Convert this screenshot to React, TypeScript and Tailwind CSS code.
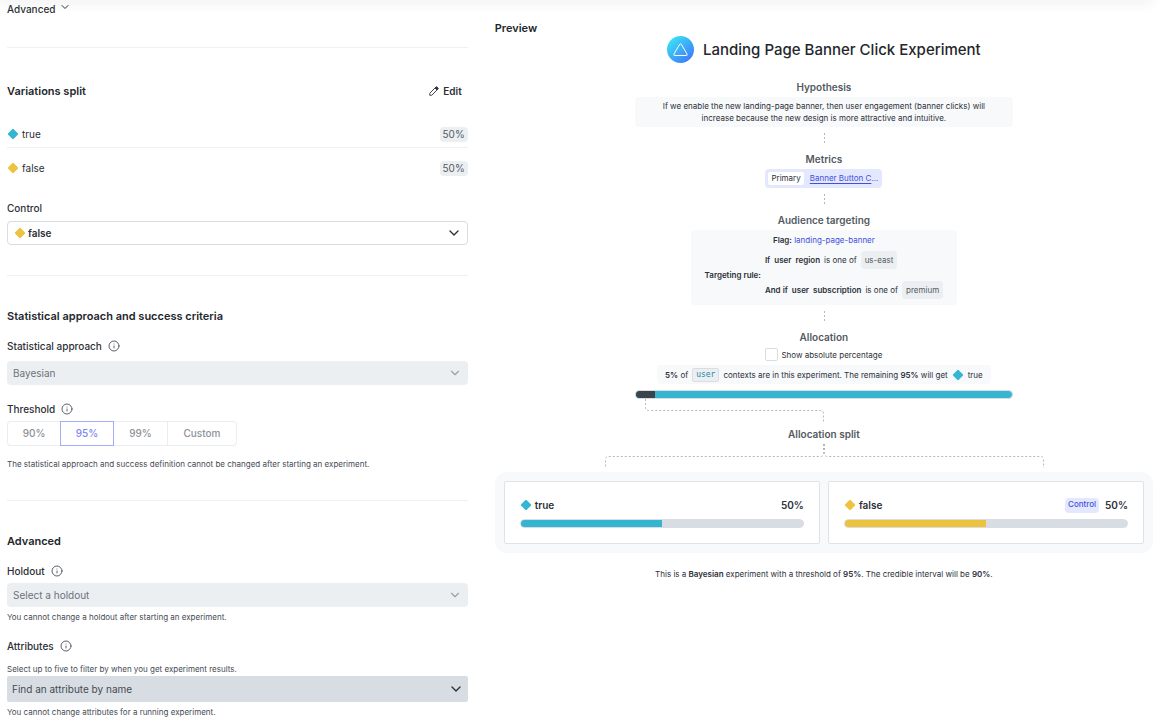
import { useState, type ReactNode } from "react";
import { ChevronDown, Info } from "lucide-react";

const TEAL = "text-[#35b5d0]";
const YELLOW = "text-[#ecc23f]";

function Diamond({ className }: { className: string }) {
  return (
    <svg viewBox="0 0 12 12" className={`size-3 shrink-0 ${className}`} aria-hidden="true">
      <path
        d="M5.2 1.2 1.2 5.2a1.1 1.1 0 0 0 0 1.6l4 4a1.1 1.1 0 0 0 1.6 0l4-4a1.1 1.1 0 0 0 0-1.6l-4-4a1.1 1.1 0 0 0-1.6 0Z"
        fill="currentColor"
      />
    </svg>
  );
}

function PencilIcon() {
  return (
    <svg viewBox="0 0 20 20" className="size-[10px]" fill="none" stroke="currentColor" strokeWidth="1.8" strokeLinejoin="round" aria-hidden="true">
      <path d="M1.500 18.500v-4L13 3a2.8 2.8 0 0 1 4 4L5.500 18.500Z" />
      <path d="M12 4 13 3a2.8 2.8 0 0 1 4 4l-1 1Z" fill="currentColor" />
    </svg>
  );
}

function SectionTitle({ children }: { children: ReactNode }) {
  return <h2 className="text-[11px] leading-4 font-semibold text-[#23272d]">{children}</h2>;
}

function FieldLabel({ htmlFor, info = true, children }: { htmlFor: string; info?: boolean; children: ReactNode }) {
  return (
    <div className="flex h-4 items-center gap-[6px]">
      <label htmlFor={htmlFor} className="text-[10px] leading-4 font-medium">
        {children}
      </label>
      {info && <Info className="size-3 text-[#4a5058]" strokeWidth={1.8} />}
    </div>
  );
}

function Help({ children }: { children: ReactNode }) {
  return <p className="text-[8px] leading-3 text-[#454b54]">{children}</p>;
}

function Divider() {
  return <hr className="border-[#eff1f3]" />;
}

function VariationRow({ color, name }: { color: string; name: string }) {
  return (
    <li className="flex items-center justify-between">
      <span className="flex items-center gap-[3px] text-[10px] leading-4">
        <Diamond className={color} />
        {name}
      </span>
      <span className="rounded bg-[#ebeff2] px-[3px] text-[10px] leading-[15px] text-[#545a62]">50%</span>
    </li>
  );
}

function DisabledSelect({ id, text }: { id: string; text: string }) {
  return (
    <div className="grid items-center">
      <select
        id={id}
        disabled
        className="col-start-1 row-start-1 h-6 w-full appearance-none rounded bg-[#ebeff2] px-[6px] text-[10px] text-[#6c727b] opacity-100"
      >
        <option>{text}</option>
      </select>
      <ChevronDown className="pointer-events-none col-start-1 row-start-1 mr-[6px] size-[14px] justify-self-end text-[#9aa0a8]" strokeWidth={2} />
    </div>
  );
}

const THRESHOLDS = ["90%", "95%", "99%", "Custom"];

function SettingsForm() {
  return (
    <form className="flex flex-col">
      <button type="button" className="mt-px flex items-start gap-1 self-start text-[10px] leading-4 font-medium">
        Advanced
        <ChevronDown className="size-3" strokeWidth={2} />
      </button>

      <div className="mt-[30px]">
        <Divider />
      </div>

      <section className="mt-[35px]">
        <div className="flex items-center justify-between pr-[6px]">
          <SectionTitle>Variations split</SectionTitle>
          <button type="button" className="flex items-center gap-1 text-[10px] leading-4 font-semibold">
            <PencilIcon />
            Edit
          </button>
        </div>
        <ul className="mt-[27px] flex flex-col">
          <VariationRow color={TEAL} name="true" />
          <li role="presentation" className="mt-[5px] mb-3">
            <Divider />
          </li>
          <VariationRow color={YELLOW} name="false" />
        </ul>
        <div className="mt-6 flex flex-col gap-[5px]">
          <FieldLabel htmlFor="control" info={false}>
            Control
          </FieldLabel>
          <div className="grid items-center">
            <select
              id="control"
              defaultValue="false"
              className="col-start-1 row-start-1 h-6 w-full appearance-none rounded border border-[#d8dde3] bg-white pl-[20px] text-[10px] font-semibold"
            >
              <option>false</option>
              <option>true</option>
            </select>
            <Diamond className="pointer-events-none col-start-1 row-start-1 ml-[7px] text-[#ecc23f]" />
            <ChevronDown className="pointer-events-none col-start-1 row-start-1 mr-[6px] size-4 justify-self-end" strokeWidth={2} />
          </div>
        </div>
      </section>

      <div className="mt-[30px]">
        <Divider />
      </div>

      <section className="mt-8">
        <SectionTitle>Statistical approach and success criteria</SectionTitle>
        <div className="mt-[14px] flex flex-col gap-[7px]">
          <FieldLabel htmlFor="approach">Statistical approach</FieldLabel>
          <DisabledSelect id="approach" text="Bayesian" />
        </div>
        <div className="mt-4 flex flex-col gap-1">
          <FieldLabel htmlFor="threshold-95">Threshold</FieldLabel>
          <div role="group" aria-label="Threshold" className="flex h-[25px] text-[10px] font-medium text-[#8d9299]">
            {THRESHOLDS.map((value) =>
              value === "95%" ? (
                <button key={value} id="threshold-95" type="button" disabled className="w-[54px] border border-[#a3aef8] text-[#7b88f3]">
                  {value}
                </button>
              ) : (
                <button
                  key={value}
                  type="button"
                  disabled
                  className="w-[54px] border-y border-r border-[#ebeef1] first:w-[53px] first:rounded-l first:border-l first:border-r-0 last:w-[69px] last:rounded-r"
                >
                  {value}
                </button>
              ),
            )}
          </div>
        </div>
        <div className="mt-3">
          <Help>The statistical approach and success definition cannot be changed after starting an experiment.</Help>
        </div>
      </section>

      <div className="mt-[30px]">
        <Divider />
      </div>

      <section className="mt-8">
        <SectionTitle>Advanced</SectionTitle>
        <div className="mt-[14px] flex flex-col gap-1">
          <FieldLabel htmlFor="holdout">Holdout</FieldLabel>
          <DisabledSelect id="holdout" text="Select a holdout" />
          <Help>You cannot change a holdout after starting an experiment.</Help>
        </div>
        <div className="mt-[15px] flex flex-col">
          <FieldLabel htmlFor="attributes">Attributes</FieldLabel>
          <div className="mt-[9px] mb-px">
            <Help>Select up to five to filter by when you get experiment results.</Help>
          </div>
          <div className="mb-1 grid items-center">
            <input
              id="attributes"
              type="text"
              disabled
              placeholder="Find an attribute by name"
              className="col-start-1 row-start-1 h-[26px] w-full rounded-[2px] bg-[#d8dde3] px-[5px] text-[10px] placeholder:text-[#454b54]"
            />
            <ChevronDown className="pointer-events-none col-start-1 row-start-1 mr-1 size-4 justify-self-end" strokeWidth={2} />
          </div>
          <Help>You cannot change attributes for a running experiment.</Help>
        </div>
      </section>
    </form>
  );
}

function DottedLink() {
  return (
    <svg viewBox="0 0 2 12" className="my-[6px] h-3 w-[2px]" aria-hidden="true">
      <path d="M1.500 0V12" stroke="#b4b8bd" strokeDasharray="2 2" />
    </svg>
  );
}

function StepTitle({ children }: { children: ReactNode }) {
  return <h3 className="text-[10px] leading-4 font-semibold text-[#545a62]">{children}</h3>;
}

function Chip({ children }: { children: ReactNode }) {
  return <span className="rounded bg-[#ebeff2] px-1 text-[8px] leading-[18px] text-[#545a62]">{children}</span>;
}

function AllocationCard({ color, fill, name, control = false }: { color: string; fill: string; name: string; control?: boolean }) {
  return (
    <article className="flex flex-1 flex-col gap-[6px] rounded-[2px] border border-[#dfe3e8] bg-white px-[15px] py-[15px]">
      <div className="flex h-4 items-center text-[10px] leading-4 font-semibold">
        <Diamond className={color} />
        <span className="ml-[3px] flex-1">{name}</span>
        {control && (
          <span className="mr-[6px] rounded bg-[#e3e8ff] px-[3px] pb-[3px] text-[8px] leading-3 font-medium text-[#4350de]">Control</span>
        )}
        <span>50%</span>
      </div>
      <div className="h-[9px] overflow-hidden rounded-full border border-[#d8dde3] bg-[#d8dde3]">
        <div className={`h-full w-1/2 ${fill}`} />
      </div>
    </article>
  );
}

function Preview() {
  const [absolute, setAbsolute] = useState(false);
  return (
    <section className="flex flex-col pt-5">
      <SectionTitle>Preview</SectionTitle>
      <div className="flex flex-col items-center">
        <div className="flex items-center gap-[9px]">
          <svg viewBox="0 0 54 54" className="size-[27px]" aria-hidden="true">
            <defs>
              <linearGradient id="logo" x1="0.15" y1="0.1" x2="0.85" y2="0.9">
                <stop offset="0" stopColor="#3be0f5" />
                <stop offset="1" stopColor="#3d7dfb" />
              </linearGradient>
            </defs>
            <circle cx="27" cy="27" r="27" fill="url(#logo)" />
            <path
              d="M25.4 16.6 13.9 36.2a1.9 1.9 0 0 0 1.6 2.8h23a1.9 1.9 0 0 0 1.6-2.8L28.6 16.6a1.9 1.9 0 0 0-3.2 0Z"
              fill="none"
              stroke="#fff"
              strokeWidth="2"
              strokeLinejoin="round"
            />
          </svg>
          <h1 className="text-[15px] leading-5 font-medium text-[#23272d]">Landing Page Banner Click Experiment</h1>
        </div>

        <div className="mt-4 flex flex-col items-center gap-[2px]">
          <StepTitle>Hypothesis</StepTitle>
          <p className="w-[378px] rounded bg-[#f7f9fb] px-5 py-[3px] text-center text-[8px] leading-3">
            If we enable the new landing-page banner, then user engagement (banner clicks) will increase because the new design is more
            attractive and intuitive.
          </p>
        </div>
        <DottedLink />
        <StepTitle>Metrics</StepTitle>
        <div className="mt-[2px] flex items-center gap-[6px] rounded bg-[#e3e8ff] py-[3px] pr-1 pl-[3px] text-[8px] leading-[13px]">
          <span className="rounded-[2px] bg-white px-[3px]">Primary</span>
          <span className="text-[#4350de]">
            <a href="#metric" className="underline underline-offset-2">
              Banner Button C
            </a>
            ...
          </span>
        </div>
        <DottedLink />
        <StepTitle>Audience targeting</StepTitle>
        <div className="mt-[2px] flex flex-col items-center rounded bg-[#f7f9fb] px-[14px] pt-1 pb-[6px] text-[8px] leading-3">
          <p>
            <span className="font-semibold">Flag:</span>{" "}
            <a href="#flag" className="text-[#4350de]">
              landing-page-banner
            </a>
          </p>
          <div className="mt-[5px] flex items-center gap-1">
            <span className="font-semibold">Targeting rule:</span>
            <div className="flex flex-col gap-3">
              <p className="flex items-center gap-1">
                <b className="font-semibold">If</b>
                <b className="font-semibold">user</b>
                <b className="font-semibold">region</b>
                <span>is one of</span>
                <Chip>us-east</Chip>
              </p>
              <p className="flex items-center gap-1">
                <b className="font-semibold">And if</b>
                <b className="font-semibold">user</b>
                <b className="font-semibold">subscription</b>
                <span>is one of</span>
                <Chip>premium</Chip>
              </p>
            </div>
          </div>
        </div>
        <DottedLink />
        <StepTitle>Allocation</StepTitle>
        <label className="mt-[3px] flex items-center gap-[3px] text-[8px] leading-3">
          <input
            type="checkbox"
            checked={absolute}
            onChange={(event) => setAbsolute(event.target.checked)}
            className="size-[13px] appearance-none rounded-[2px] border border-[#d8dde3] bg-white checked:bg-[#405bff]"
          />
          Show absolute percentage
        </label>
        <p className="mt-1 flex h-[19px] items-center gap-1 rounded bg-[#f7f9fb] px-2 text-[8px] leading-3">
          <span>
            <b className="font-semibold">5%</b> of
          </span>
          <code className="rounded-[2px] border border-[#d8dde3] bg-[#ebeff2] px-[3px] font-['DejaVu_Sans_Mono',monospace] text-[8px] text-[#2a86a0]">
            user
          </code>
          <span>
            contexts are in this experiment. The remaining <b className="font-semibold">95%</b> will get
          </span>
          <Diamond className={TEAL} />
          <span>true</span>
        </p>
        <div className="mt-[6px] flex h-[9px] w-[378px] overflow-hidden rounded-full border border-[#d8dde3] bg-[#35b5d0]">
          <div className="w-[5%] bg-[#3d434b]" />
        </div>
        <svg viewBox="0 0 378 24" className="h-6 w-[378px]" fill="none" stroke="#b4b8bd" strokeDasharray="2 2" aria-hidden="true">
          <path d="M10.500 0V8.500Q10.500 11.500 13.500 11.500H185.500Q188.500 11.500 188.500 14.500V24" />
        </svg>
        <div className="mt-[3px]">
          <StepTitle>Allocation split</StepTitle>
        </div>
        <svg viewBox="0 0 440 24" className="mt-[2px] h-6 w-[440px]" fill="none" stroke="#b4b8bd" strokeDasharray="2 2" aria-hidden="true">
          <path d="M219.500 0V9.500Q219.500 12.500 216.500 12.500H4.500Q1.500 12.500 1.500 15.500V24" />
          <path d="M220.500 0V9.500Q220.500 12.500 223.500 12.500H436.500Q439.500 12.500 439.500 15.500V24" />
        </svg>
      </div>
      <div className="mt-1 flex gap-2 rounded-xl bg-[#f7f9fb] p-[9px]">
        <AllocationCard color={TEAL} fill="bg-[#35b5d0]" name="true" />
        <AllocationCard color={YELLOW} fill="bg-[#ecc23f]" name="false" control />
      </div>
      <p className="mt-[15px] text-center text-[8px] leading-3">
        This is a <b className="font-semibold">Bayesian</b> experiment with a threshold of <b className="font-semibold">95%</b>. The credible
        interval will be <b className="font-semibold">90%</b>.
      </p>
    </section>
  );
}

export default function App() {
  return (
    <div className="overflow-hidden bg-white font-['Inter',sans-serif] text-[#2c3038]">
      <div className="mr-4 h-0 rounded-full shadow-[0_0_12px_2px_rgba(0,0,0,0.12)]" />
      <main className="grid grid-cols-[7fr_10fr] gap-[27px] pr-[15px] pl-[7px]">
        <SettingsForm />
        <Preview />
      </main>
    </div>
  );
}
